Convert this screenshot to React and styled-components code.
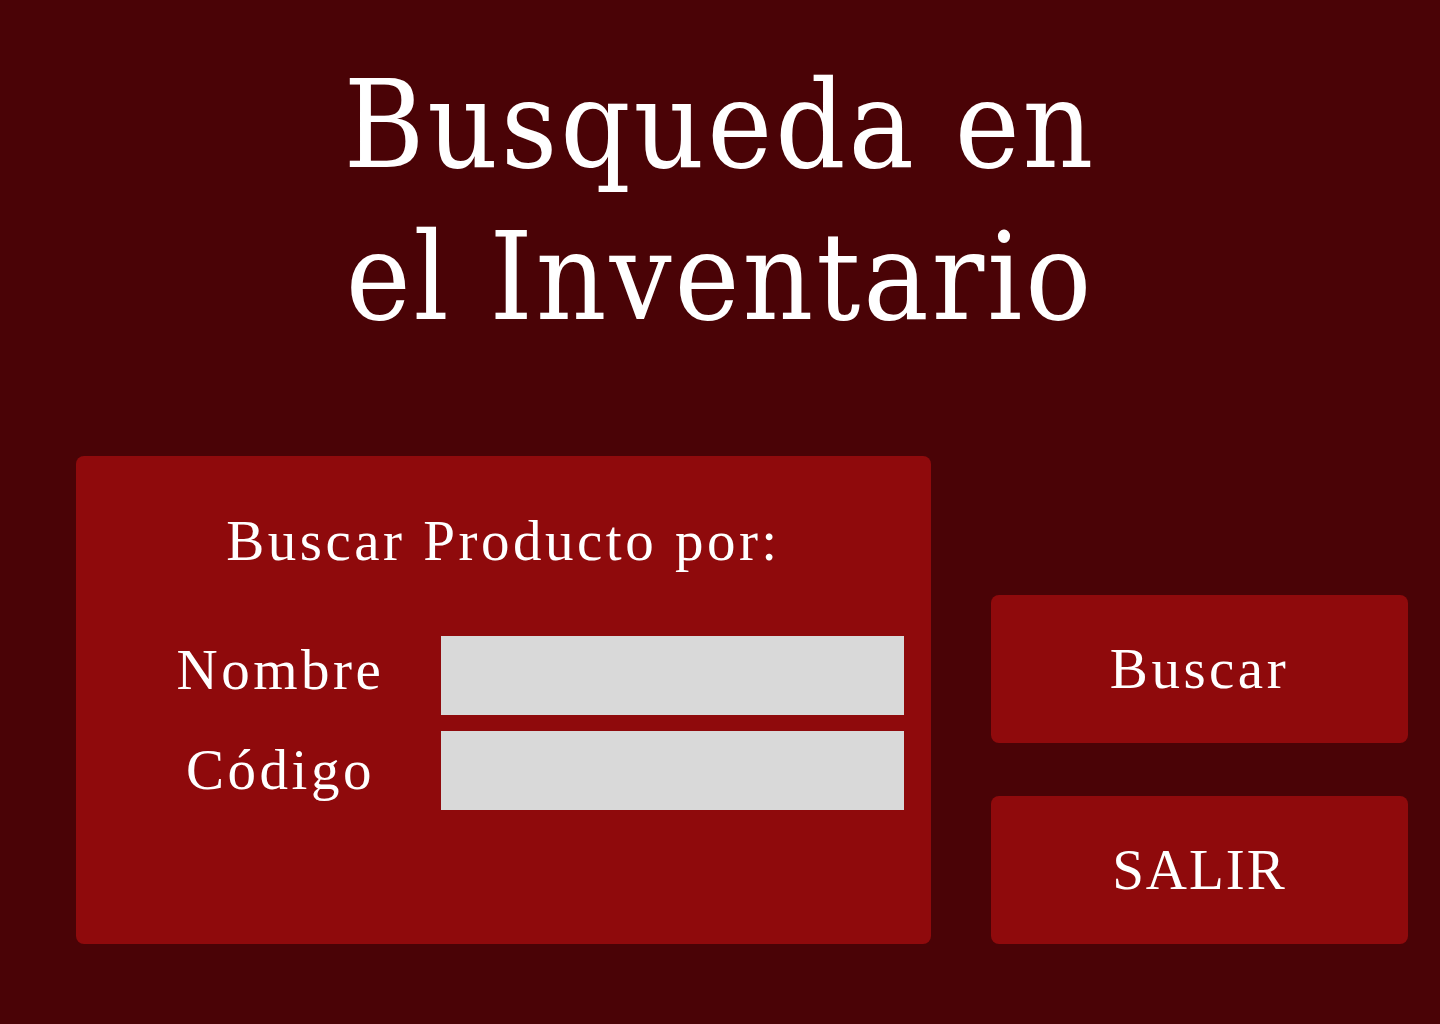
import React from "react";
import styled, { createGlobalStyle } from "styled-components";

const GlobalStyle = createGlobalStyle`
  html, body {
    margin: 0;
    padding: 0;
    background: #4a0306;
  }
`;

const PAGE = styled.div`
  width: 1440px;
  height: 1024px;
  background: #4a0306;
  display: flex;
  flex-direction: column;
  align-items: center;
  overflow: hidden;
`;

const TITLE = styled.h1`
  margin: 49px 0 0;
  font-family: "DejaVu Serif Condensed", "DejaVu Serif", serif;
  font-stretch: condensed;
  font-weight: 400;
  font-size: 122px;
  letter-spacing: 3px;
  line-height: 152px;
  color: #ffffff;
  text-align: center;
`;

const MAIN = styled.div`
  margin-top: 103px;
  width: 100%;
  box-sizing: border-box;
  padding: 0 32px 0 76px;
  display: flex;
  align-items: flex-end;
  gap: 60px;
`;

const PANEL = styled.section`
  width: 855px;
  height: 488px;
  box-sizing: border-box;
  background: #8f0a0c;
  border-radius: 8px;
  padding: 52px 27px 0 44px;
  display: flex;
  flex-direction: column;
`;

const TEXT = styled.span`
  font-family: "Liberation Serif", "Times New Roman", serif;
  font-size: 57px;
  letter-spacing: ${props => (props.spacing !== undefined ? props.spacing : 3.5)}px;
  line-height: 1.15;
  color: #ffffff;
`;

const HEADING = styled(TEXT)`
  display: block;
  text-align: center;
  margin: 0 0 62px -44px;
  padding-left: 27px;
`;

const FORM = styled.div`
  display: grid;
  grid-template-columns: 321px 1fr;
  row-gap: 16px;
  align-items: center;
`;

const LABEL = styled(TEXT)`
  text-align: center;
  margin-top: ${props => props.offset || 0}px;
`;

const INPUT = styled.input`
  height: 79px;
  border: none;
  background: #d9d9d9;
  outline: none;
  padding: 0 16px;
  box-sizing: border-box;
  font-family: "Liberation Serif", serif;
  font-size: 32px;
`;

const ACTIONS = styled.div`
  flex: 1;
  display: flex;
  flex-direction: column;
  gap: 53px;
`;

const BUTTON = styled.button`
  height: 148px;
  border: none;
  border-radius: 8px;
  background: #8f0a0c;
  cursor: pointer;
  padding: 0;
`;

export default function App() {
  return (
    <PAGE>
      <GlobalStyle />
      <TITLE>
        Busqueda en
        <br />
        el Inventario
      </TITLE>
      <MAIN>
        <PANEL>
          <HEADING>Buscar Producto por:</HEADING>
          <FORM>
            <LABEL offset={-10}>Nombre</LABEL>
            <INPUT type="text" />
            <LABEL>Código</LABEL>
            <INPUT type="text" />
          </FORM>
        </PANEL>
        <ACTIONS>
          <BUTTON>
            <TEXT>Buscar</TEXT>
          </BUTTON>
          <BUTTON>
            <TEXT spacing={2}>SALIR</TEXT>
          </BUTTON>
        </ACTIONS>
      </MAIN>
    </PAGE>
  );
}
